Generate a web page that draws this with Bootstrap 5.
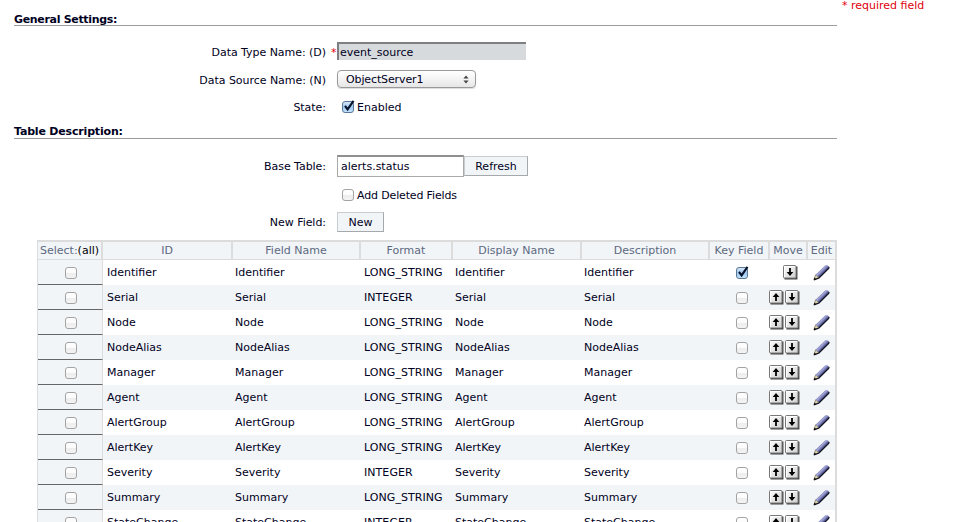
<!DOCTYPE html>
<html lang="en">
<head>
<meta charset="utf-8">
<title>Data Type Settings</title>
<link href="https://cdn.jsdelivr.net/npm/bootstrap@5.3.0/dist/css/bootstrap.min.css" rel="stylesheet">
<style>
body{font:11px/15px "DejaVu Sans",Verdana,sans-serif;color:#000022;background:#fff;height:522px}
.settings{width:823px;margin-left:14px}
.section-title{font-size:11px;font-weight:bold;line-height:12px;margin:1px 0 13px;padding-top:5px;border-bottom:1px solid #9b9b9b;letter-spacing:-.18px}
.first-title{padding-top:13px;margin:0 0 12px;letter-spacing:-.32px}
.first-title span{position:relative;top:1px}
.form-line{height:28px}
.form-line.tall{height:29px}
.form-line.tall span{padding-top:1px;letter-spacing:-.15px}
.form-line.short{height:26px}
.form-line .lbl{width:312px;text-align:right;letter-spacing:-.04px}
.star-cell{width:11px;padding-left:5px}
.req{color:#e0000c}
.field-name,.field-table{font:11px "DejaVu Sans",sans-serif;color:#000022;border-radius:0;padding:0 0 0 1px;outline:0}
.field-name{width:189px;height:18px;margin-top:-2px;background:#d6dadd;border:0;border-top:2px solid #7d8083;border-left:2px solid #7d8083;}
.field-table{width:127px;height:22px;border:1px solid #aaa;border-top:2px solid #8f8f8f;padding-left:3px}
.source-select{width:139px;height:18px;margin-top:-2px;border:1px solid #999;border-radius:4px;background:linear-gradient(#fff,#f4f4f4 50%,#e6e6e6);padding:0 6px 0 8px;box-shadow:0 1px 1px #ddd;letter-spacing:-.12px}
.flat-btn{font-size:11px;line-height:17px;height:20px;padding:1px 0 0;border-radius:0;background:#f2f5f8;color:#000022;border:1px solid #c9cdcf;border-right-color:#a5a9ac;border-bottom-color:#a5a9ac}
.w-refresh{width:64px}.w-new{width:47px}
.tick{display:block;width:14px;height:14px;flex:none;overflow:visible}
.form-line .tick{margin-left:4px;margin-right:2px}
.grid-wrap{margin-left:23px;width:800px;padding-top:5px}
.fields{table-layout:fixed;width:800px;border-collapse:separate;border-spacing:0;color:#000022;border:1px solid #dcdcdc;border-top:2px solid #dcdcdc;border-right-width:2px;margin:0}
.fields th,.fields td{padding:0;border:0;white-space:nowrap}
.fields th{height:18px;line-height:17px;font-weight:normal;text-align:center;background:#f2f5f8;color:#5c6980;border-bottom:1px solid #dcdcdc;border-right:2px solid #dcdcdc}
.fields th:last-child{border-right:0}
.fields td{height:25px;line-height:24px;padding-left:4px}
.fields td.mid{padding-left:2px}
.fields td.fmt{padding-left:3px;letter-spacing:.06px}
.fields tbody tr:nth-child(even) td{background:#f2f5f8}
.fields tbody td.pick{background:#f2f5f8;border-bottom:1px solid #666;border-right:1px solid #dcdcdc;padding:1px 0 0 26px}
.fields td.key{padding:1px 0 0 25px}
.fields td.move{padding:0 8px 0 0}
.move .keys{width:31px;margin-left:-1px}
.move .keys.single{padding-right:2px}
.fields td.edit{padding:0 0 0 5px}
.move svg,.edit svg{display:block}
.note{margin-left:5px;margin-top:-1px;line-height:13px;height:13px}
</style>
<script src="https://cdn.jsdelivr.net/npm/bootstrap@5.3.0/dist/js/bootstrap.bundle.min.js"></script>
</head>
<body class="overflow-hidden">
<svg width="0" height="0" class="position-absolute">
  <defs>
    <linearGradient id="gOff" x2="0" y2="1"><stop stop-color="#fff"/><stop offset=".5" stop-color="#fbfbfb"/><stop offset=".55" stop-color="#ededed"/><stop offset="1" stop-color="#f5f5f5"/></linearGradient>
    <linearGradient id="gOn" x2="0" y2="1"><stop stop-color="#d9e9f8"/><stop offset=".5" stop-color="#9fc8ef"/><stop offset="1" stop-color="#c5e6fd"/></linearGradient>
    <linearGradient id="gPen" gradientUnits="userSpaceOnUse" x1="7" y1="6" x2="10.5" y2="9.5"><stop offset="0" stop-color="#6d71a8"/><stop offset=".3" stop-color="#a5a8dc"/><stop offset="1" stop-color="#34386c"/></linearGradient>
    <linearGradient id="gKey" x2="1" y2="1"><stop stop-color="#fff"/><stop offset="1" stop-color="#cfcfcf"/></linearGradient>
    <symbol id="off" viewBox="0 0 14 14"><rect x="1.5" y="1.5" width="11" height="11" rx="2.5" fill="url(#gOff)" stroke="#a3a3a3"/></symbol>
    <symbol id="on" viewBox="0 0 14 14"><rect x="1.5" y="1.5" width="11" height="11" rx="2.5" fill="url(#gOn)" stroke="#5d7896"/><path d="M4 5.8 6.6 9.4 12.5.8" fill="none" stroke="#06122c" stroke-width="2.1"/></symbol>
    <symbol id="key" viewBox="0 0 15 15"><path d="M1.5 13.7H13.7V1.5" fill="none" stroke="#444" stroke-width="1.5"/><rect x=".5" y=".5" width="12.5" height="12.5" rx="1" fill="url(#gKey)" stroke="#777"/><path d="M1.5 12V1.5H12" fill="none" stroke="#fff"/></symbol>
    <symbol id="down" viewBox="0 0 15 15"><use href="#key"/><path d="M7 3V9" stroke="#000" stroke-width="1.8"/><path d="M3.7 7H10.3L7 11Z"/></symbol>
    <symbol id="up" viewBox="0 0 15 15"><use href="#key"/><path d="M7 11V5" stroke="#000" stroke-width="1.8"/><path d="M3.7 7H10.3L7 3Z"/></symbol>
    <symbol id="pen" viewBox="0 0 17 17"><path d="M1 15.6 2.6 10.8 5.9 13.6Z" fill="#e3d5a4" stroke="#555" stroke-width=".6"/><path d="M2.6 10.7 12.2 1.4Q13.4.4 15 1.6 16.6 3 15.6 4.4L6.2 13.8Z" fill="url(#gPen)"/><path d="M16.1 2.9 15.7 4.5 6 14 1 15.9" fill="none" stroke="#101220" stroke-width="1.2"/><path d="M.6 16.2 1.4 13.6 3.2 15.2Z" fill="#111"/></symbol>
  </defs>
</svg>

<div class="d-flex">
  <main class="settings flex-shrink-0">
    <h2 class="section-title first-title"><span>General Settings:</span></h2>
    <div class="form-line d-flex align-items-center">
      <label class="lbl">Data Type Name: (D)</label><span class="star-cell req">*</span>
      <input class="field-name" value="event_source" readonly>
    </div>
    <div class="form-line d-flex align-items-center">
      <label class="lbl">Data Source Name: (N)</label><span class="star-cell"></span>
      <div class="source-select d-flex align-items-center justify-content-between"><span>ObjectServer1</span>
        <svg width="6" height="9" viewBox="0 0 6 9"><path d="M.4 3.5 3 .4 5.6 3.5ZM.4 5.5 3 8.6 5.6 5.5Z" fill="#444"/></svg></div>
    </div>
    <div class="form-line short d-flex align-items-center">
      <label class="lbl">State:</label><span class="star-cell"></span>
      <svg class="tick"><use href="#on"/></svg><span>Enabled</span>
    </div>
    <h2 class="section-title">Table Description:</h2>
    <div class="form-line d-flex align-items-center">
      <label class="lbl">Base Table:</label><span class="star-cell"></span>
      <input class="field-table" value="alerts.status"><button class="btn flat-btn w-refresh">Refresh</button>
    </div>
    <div class="form-line tall d-flex align-items-center">
      <label class="lbl"></label><span class="star-cell"></span>
      <svg class="tick"><use href="#off"/></svg><span>Add Deleted Fields</span>
    </div>
    <div class="form-line short d-flex align-items-center">
      <label class="lbl">New Field:</label><span class="star-cell"></span>
      <button class="btn flat-btn w-new">New</button>
    </div>
    <div class="grid-wrap">
      <table class="fields">
        <colgroup><col style="width:65px"><col style="width:130px"><col style="width:128px"><col style="width:92px"><col style="width:129px"><col style="width:128px"><col style="width:60px"><col style="width:38px"><col></colgroup>
        <thead><tr><th>Select:<span class="text-black">(all)</span></th><th>ID</th><th>Field Name</th><th>Format</th><th>Display Name</th><th>Description</th><th>Key Field</th><th>Move</th><th>Edit</th></tr></thead>
        <tbody id="rows"></tbody>
      </table>
    </div>
  </main>
  <div class="note req text-nowrap">* required field</div>
</div>
<script>
const names = ["Identifier","Serial","Node","NodeAlias","Manager","Agent","AlertGroup","AlertKey","Severity","Summary","StateChange"];
const integers = ["Serial","Severity","StateChange"];
const icon = (id, w) => `<svg width="${w}" height="${w}"><use href="#${id}"/></svg>`;
document.getElementById("rows").innerHTML = names.map((n, i) => `<tr>
  <td class="pick"><svg class="tick"><use href="#off"/></svg></td>
  <td>${n}</td><td class="mid">${n}</td><td class="fmt">${integers.includes(n) ? "INTEGER" : "LONG_STRING"}</td><td class="mid">${n}</td><td class="mid">${n}</td>
  <td class="key"><svg class="tick"><use href="#${i ? "off" : "on"}"/></svg></td>
  <td class="move"><div class="keys d-flex ${i ? "justify-content-between" : "single justify-content-end"}">${i ? icon("up", 15) : ""}${icon("down", 15)}</div></td>
  <td class="edit">${icon("pen", 17)}</td></tr>`).join("");
</script>
</body>
</html>
